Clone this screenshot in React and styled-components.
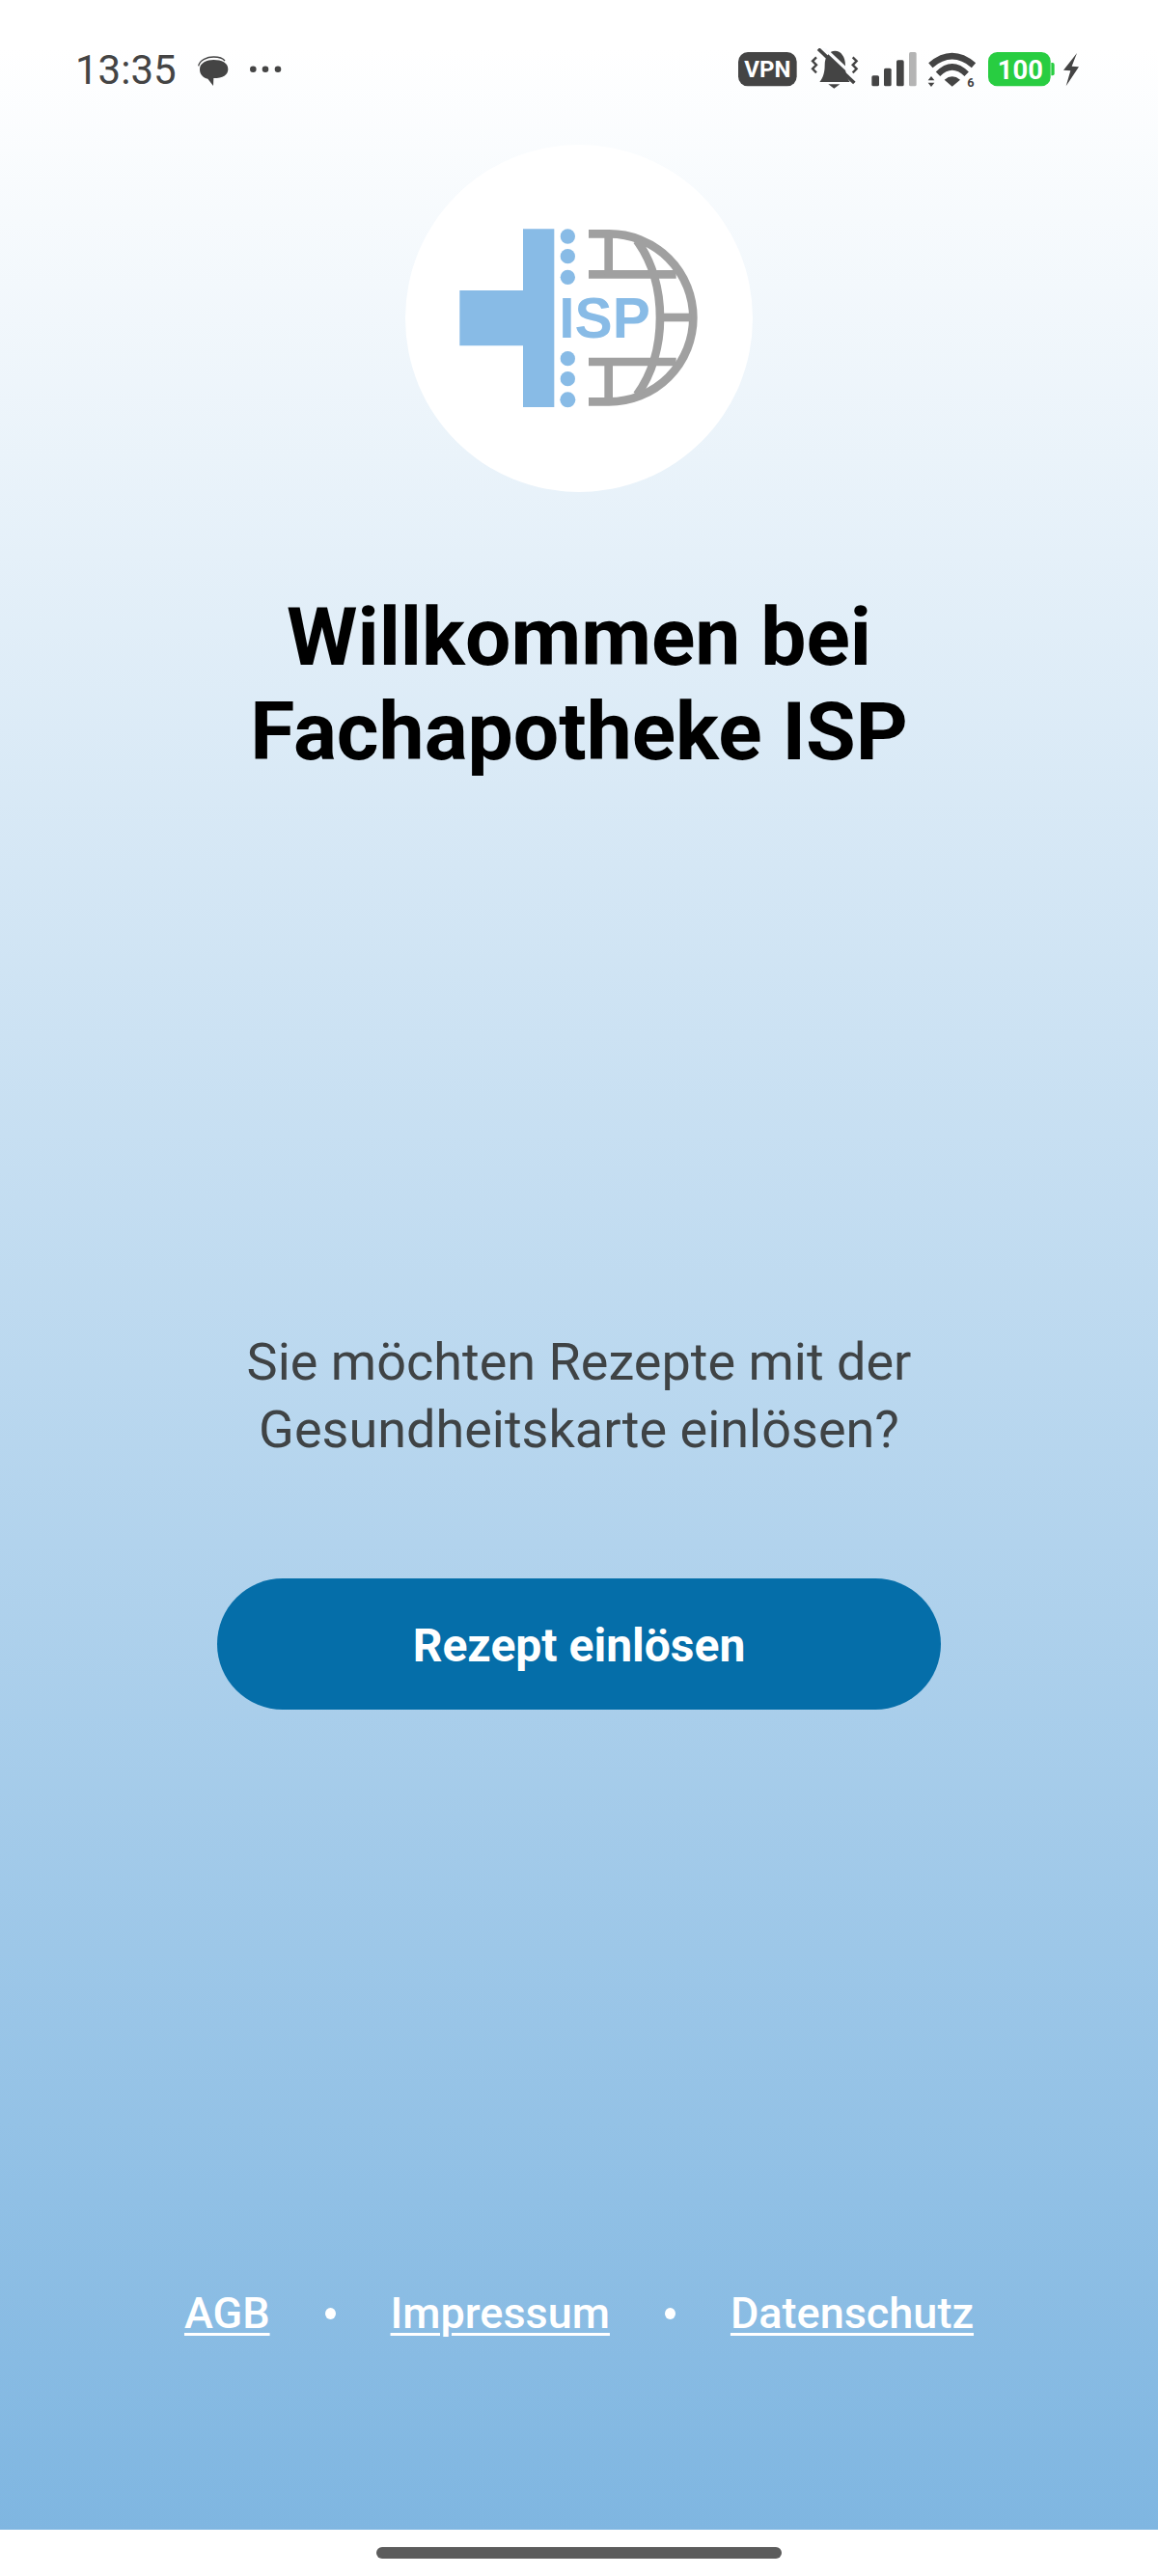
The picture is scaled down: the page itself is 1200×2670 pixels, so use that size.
import React from 'react';
import styled, { createGlobalStyle } from 'styled-components';

const GlobalStyle = createGlobalStyle`
  html, body {
    margin: 0;
    padding: 0;
    background: #fff;
    font-family: Roboto, "Liberation Sans", sans-serif;
  }
`;

const Page = styled.div`
  width: 1200px;
  height: 2670px;
  display: flex;
  flex-direction: column;
  background: #fff;
  overflow: hidden;
`;

const Screen = styled.main`
  height: 2622px;
  display: flex;
  flex-direction: column;
  align-items: center;
  background: linear-gradient(180deg, #fff 0, #fff 50px, #7fb6e1 2622px);
`;

const StatusBar = styled.header`
  width: 100%;
  box-sizing: border-box;
  height: 150px;
  padding: 50px 80px 0 78px;
  display: flex;
  justify-content: space-between;
  align-items: flex-start;
`;

const StatusLeft = styled.div`
  display: flex;
  align-items: center;
  height: 46px;
`;

const Clock = styled.span`
  font-size: 42px;
  line-height: 46px;
  color: #444;
  margin-right: 21px;
`;

const StatusRight = styled.div`
  display: flex;
  align-items: flex-start;
`;

const StatusIcon = styled.svg`
  display: block;
  width: ${(p) => p.$w}px;
  height: 46px;
  margin-left: ${(p) => p.$gap || 0}px;
`;

const LogoCircle = styled.div`
  width: 360px;
  height: 360px;
  border-radius: 50%;
  background: #fff;
  flex-shrink: 0;
`;

const LogoSvg = styled.svg`
  display: block;
  width: 360px;
  height: 360px;
`;

const Title = styled.h1`
  margin: 102px 0 0;
  font-size: 84px;
  line-height: 98px;
  font-weight: 700;
  color: #000;
  text-align: center;
`;

const Subtitle = styled.p`
  margin: 569px 0 0;
  font-size: 54px;
  line-height: 70px;
  font-weight: 400;
  color: #3f4345;
  text-align: center;
`;

const PrimaryButton = styled.button`
  margin-top: 119px;
  width: 750px;
  height: 136px;
  padding: 2px 0 0;
  border: 0;
  border-radius: 68px;
  background: #056ea9;
  color: #fff;
  font-family: inherit;
  font-size: 48px;
  font-weight: 700;
`;

const FooterLinks = styled.nav`
  margin-top: 596px;
  height: 60px;
  display: flex;
  align-items: center;
  gap: 57px;
`;

const FooterLink = styled.a`
  font-size: 45px;
  font-weight: 500;
  line-height: 60px;
  color: #fff;
  text-decoration: underline;
  text-decoration-thickness: 3px;
  text-underline-offset: 5px;
`;

const Dot = styled.span`
  width: 11px;
  height: 12px;
  border-radius: 50%;
  background: #fff;
`;

const HomeArea = styled.div`
  flex: 1;
  display: flex;
  justify-content: center;
  padding-top: 18px;
`;

const HomeBar = styled.div`
  width: 420px;
  height: 12px;
  border-radius: 6px;
  background: #5c5c5c;
`;

const ink = '#444';

// status icons are traced in the coordinates of a 3x crop, hence the viewBox origins
const MessageIcon = () => (
  <StatusIcon $w={34} viewBox="612 150 102 138">
    <path d="M617 205c4-18 27-28 47-28 16 0 29 4 35 12" fill="none" stroke={ink} strokeWidth="4" />
    <path d="M621 215c0-20 23-29 43-29 25 0 45 9 45 29 0 18-16 28-45 28l-1 24-17-22c-15-4-25-14-25-30z" fill={ink} />
  </StatusIcon>
);

const MoreDots = () => (
  <StatusIcon $w={36} $gap={20} viewBox="0 0 36 46">
    <circle cx="4.3" cy="21.7" r="3.3" fill={ink} />
    <circle cx="17" cy="21.7" r="3.3" fill={ink} />
    <circle cx="30" cy="21.7" r="3.3" fill={ink} />
  </StatusIcon>
);

const VpnIcon = () => (
  <StatusIcon $w={62} viewBox="72 60 186 138">
    <rect x="75" y="72" width="182" height="106" rx="30" fill={ink} />
    <text x="166" y="151" textAnchor="middle" fontFamily="Roboto, sans-serif" fontWeight="700" fontSize="72" fill="#fff">VPN</text>
  </StatusIcon>
);

const BellIcon = () => (
  <StatusIcon $w={50} $gap={14} viewBox="300 60 150 138">
    <path d="M328 165c12-15 16-32 16-52 0-27 14-45 32-45s32 18 32 45c0 22 4 38 14 52z" fill={ink} />
    <path d="M355 172h36l-18 13z" fill={ink} />
    <path d="M338 56l113 106" stroke="#fbfcfe" strokeWidth="10" />
    <path d="M324 62l112 106" stroke={ink} strokeWidth="11" />
    <path d="M318 88l-12 12 12 12-12 12 12 12" fill="none" stroke={ink} strokeWidth="7" />
    <path d="M431 88l12 12-12 12 12 12-12 12" fill="none" stroke={ink} strokeWidth="7" />
  </StatusIcon>
);

const SignalIcon = () => (
  <StatusIcon $w={47} $gap={13} viewBox="486 60 141 138">
    <rect x="487" y="145" width="23" height="33" rx="5" fill={ink} />
    <rect x="525" y="122" width="23" height="56" rx="5" fill={ink} />
    <rect x="564" y="97" width="23" height="81" rx="5" fill={ink} />
    <rect x="603" y="72" width="23" height="106" rx="5" fill="#b4b4b4" />
  </StatusIcon>
);

const WifiIcon = () => (
  <StatusIcon $w={52} $gap={11} viewBox="660 60 156 138">
    <path d="M670 113Q737 56 804 113" fill="none" stroke={ink} strokeWidth="20" />
    <path d="M693 140Q737 96 782 140" fill="none" stroke={ink} strokeWidth="19" />
    <path d="M713 158l24 21 25-21q-25-20-49 0z" fill={ink} />
    <path d="M662 160h20l-10-13zM662 167h20l-10 13z" fill={ink} />
    <text x="795" y="181" textAnchor="middle" fontFamily="Roboto, sans-serif" fontWeight="700" fontSize="38" fill={ink}>6</text>
  </StatusIcon>
);

const BatteryIcon = () => (
  <StatusIcon $w={70} $gap={11} viewBox="852 60 210 138">
    <rect x="852" y="72" width="194" height="106" rx="28" fill="#28cd41" />
    <path d="M1048 105h4a6 6 0 0 1 6 6v28a6 6 0 0 1-6 6h-4z" fill="#28cd41" />
    <text x="952" y="157" textAnchor="middle" fontFamily="Roboto, sans-serif" fontWeight="700" fontSize="82" fill="#fff">100</text>
  </StatusIcon>
);

const BoltIcon = () => (
  <StatusIcon $w={18} $gap={8} viewBox="1086 60 54 138">
    <path d="M1128 75l-42 53 22 2-14 48 40-60-22-2z" fill={ink} />
  </StatusIcon>
);

const Logo = () => (
  <LogoSvg viewBox="60 60 1080 1080">
    <g fill="#88bbe6">
      <path d="M426 322h97v554h-97V685H229V513h197z" />
      <circle cx="565" cy="345" r="23" />
      <circle cx="565" cy="407" r="23" />
      <circle cx="565" cy="472" r="23" />
      <circle cx="565" cy="725" r="23" />
      <circle cx="565" cy="788" r="23" />
      <circle cx="565" cy="853" r="24" />
      <text x="538" y="660" fontFamily="'Liberation Sans', sans-serif" fontWeight="700" fontSize="176">ISP</text>
    </g>
    <g fill="none" stroke="#a0a0a0" strokeWidth="26">
      <path d="M630 337h64a261 261 0 0 1 0 522h-64" />
      <path d="M630 463h272M630 735h272" />
      <path d="M692 340v123M692 735v123" />
      <path d="M780 358c96 132 96 348 0 480" />
      <path d="M855 597h95" />
    </g>
  </LogoSvg>
);

const App = () => (
  <Page>
    <GlobalStyle />
    <Screen>
      <StatusBar>
        <StatusLeft>
          <Clock>13:35</Clock>
          <MessageIcon />
          <MoreDots />
        </StatusLeft>
        <StatusRight>
          <VpnIcon />
          <BellIcon />
          <SignalIcon />
          <WifiIcon />
          <BatteryIcon />
          <BoltIcon />
        </StatusRight>
      </StatusBar>
      <LogoCircle>
        <Logo />
      </LogoCircle>
      <Title>
        Willkommen bei
        <br />
        Fachapotheke ISP
      </Title>
      <Subtitle>
        Sie möchten Rezepte mit der
        <br />
        Gesundheitskarte einlösen?
      </Subtitle>
      <PrimaryButton>Rezept einlösen</PrimaryButton>
      <FooterLinks>
        <FooterLink>AGB</FooterLink>
        <Dot />
        <FooterLink>Impressum</FooterLink>
        <Dot />
        <FooterLink>Datenschutz</FooterLink>
      </FooterLinks>
    </Screen>
    <HomeArea>
      <HomeBar />
    </HomeArea>
  </Page>
);

export default App;
